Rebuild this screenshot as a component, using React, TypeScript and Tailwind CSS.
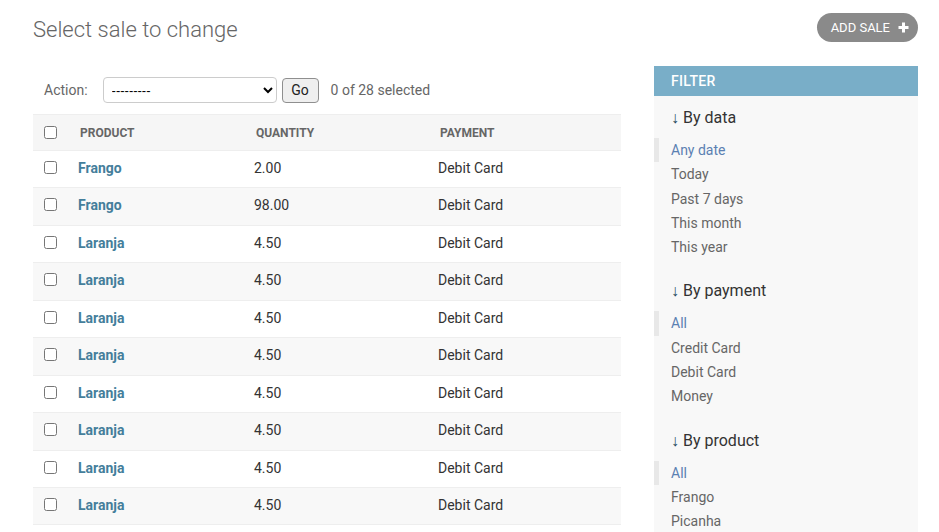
const ROWS = [
  { product: "Frango", quantity: "2.00", payment: "Debit Card" },
  { product: "Frango", quantity: "98.00", payment: "Debit Card" },
  { product: "Laranja", quantity: "4.50", payment: "Debit Card" },
  { product: "Laranja", quantity: "4.50", payment: "Debit Card" },
  { product: "Laranja", quantity: "4.50", payment: "Debit Card" },
  { product: "Laranja", quantity: "4.50", payment: "Debit Card" },
  { product: "Laranja", quantity: "4.50", payment: "Debit Card" },
  { product: "Laranja", quantity: "4.50", payment: "Debit Card" },
  { product: "Laranja", quantity: "4.50", payment: "Debit Card" },
  { product: "Laranja", quantity: "4.50", payment: "Debit Card" },
  { product: "Laranja", quantity: "4.50", payment: "Debit Card" },
];

const FILTERS = [
  { title: "By data", choices: ["Any date", "Today", "Past 7 days", "This month", "This year"] },
  { title: "By payment", choices: ["All", "Credit Card", "Debit Card", "Money"] },
  { title: "By product", choices: ["All", "Frango", "Picanha", "Laranja"] },
];

function FilterSection({ title, choices }: { title: string; choices: string[] }) {
  return (
    <div className="mb-[22px]">
      <h3 className="px-[17px] text-[16px] leading-[20px] text-[#333]">
        <span className="text-[#264b5d]">↓</span> {title}
      </h3>
      <ul className="mt-[10px]">
        {choices.map((c, i) => (
          <li
            key={c}
            className={
              i === 0
                ? "border-l-[5px] border-[#e8e8e8] pl-[12px] text-[14px] leading-[24.3px] text-[#5b80b2]"
                : "pl-[17px] text-[14px] leading-[24.3px] text-[#666]"
            }
          >
            {c}
          </li>
        ))}
      </ul>
    </div>
  );
}

export default function App() {
  return (
    <div className="min-h-screen bg-white px-[33px] pt-[13px] pr-[21px] font-['Roboto','Liberation_Sans',sans-serif] text-[#333]">
      <div className="flex items-start justify-between">
        <h1 className="mt-[4px] text-[22px] font-light leading-[26px] text-[#666]">Select sale to change</h1>
        <a className="flex h-[29px] items-center gap-[8px] rounded-full bg-[#8a8a8a] pl-[14px] pr-[9px] text-[13px] uppercase text-white">
          Add sale
          <svg width="11" height="11" viewBox="0 0 11 11" aria-hidden>
            <path d="M5.5 0.5v10M0.5 5.5h10" stroke="white" strokeWidth="3" />
          </svg>
        </a>
      </div>

      <div className="mt-[23px] flex gap-[33px]">
        <div className="flex-1">
          <div className="flex h-[48px] items-center pl-[11px] text-[14px] text-[#666]">
            <span>Action:</span>
            <select className="ml-[15px] h-[26px] w-[174px] rounded-[4px] border border-[#ccc] bg-white px-[4px] font-['Liberation_Sans',sans-serif] text-[13px] text-black">
              <option>---------</option>
            </select>
            <button className="ml-[5px] h-[25px] w-[37px] rounded-[4px] border border-[#8f8f8f] bg-[#efefef] font-['Roboto','Liberation_Sans',sans-serif] text-[14px] text-[#222]">
              Go
            </button>
            <span className="ml-[12px]">0 of 28 selected</span>
          </div>

          <table className="w-full table-fixed border-collapse">
            <colgroup>
              <col className="w-[39px]" />
              <col className="w-[176px]" />
              <col className="w-[184px]" />
              <col />
            </colgroup>
            <thead>
              <tr className="h-[36px] border-y border-[#eee] bg-[#f6f6f6]">
                <th className="pl-[11px] text-left align-middle">
                  <input type="checkbox" className="m-0 block h-[13px] w-[13px]" />
                </th>
                <th className="pl-[8px] text-left text-[12px] font-bold uppercase text-[#666]">Product</th>
                <th className="pl-[8px] text-left text-[12px] font-bold uppercase text-[#666]">Quantity</th>
                <th className="pl-[8px] text-left text-[12px] font-bold uppercase text-[#666]">Payment</th>
              </tr>
            </thead>
            <tbody>
              {ROWS.map((r, i) => (
                <tr key={i} className={`border-b border-[#eee] ${i % 2 === 1 ? "bg-[#f8f8f8]" : "bg-white"}`}>
                  <td className="pl-[11px] pt-[10px] align-top">
                    <input type="checkbox" className="m-0 block h-[13px] w-[13px]" />
                  </td>
                  <td className="pt-[7px] pb-[9px] pl-[6px] text-[14px] font-bold leading-[20.44px] text-[#447e9b]">{r.product}</td>
                  <td className="pt-[7px] pb-[9px] pl-[6px] text-[14px] leading-[20.44px] text-[#333]">{r.quantity}</td>
                  <td className="pt-[7px] pb-[9px] pl-[6px] text-[14px] leading-[20.44px] text-[#333]">{r.payment}</td>
                </tr>
              ))}
            </tbody>
          </table>
        </div>

        <div className="w-[264px] shrink-0 bg-[#f8f8f8]">
          <h2 className="flex h-[30px] items-center bg-[#79aec8] px-[17px] text-[14px] font-medium uppercase tracking-[0.3px] text-white">
            Filter
          </h2>
          <div className="pt-[12px]">
            {FILTERS.map((f) => (
              <FilterSection key={f.title} title={f.title} choices={f.choices} />
            ))}
          </div>
        </div>
      </div>
    </div>
  );
}
